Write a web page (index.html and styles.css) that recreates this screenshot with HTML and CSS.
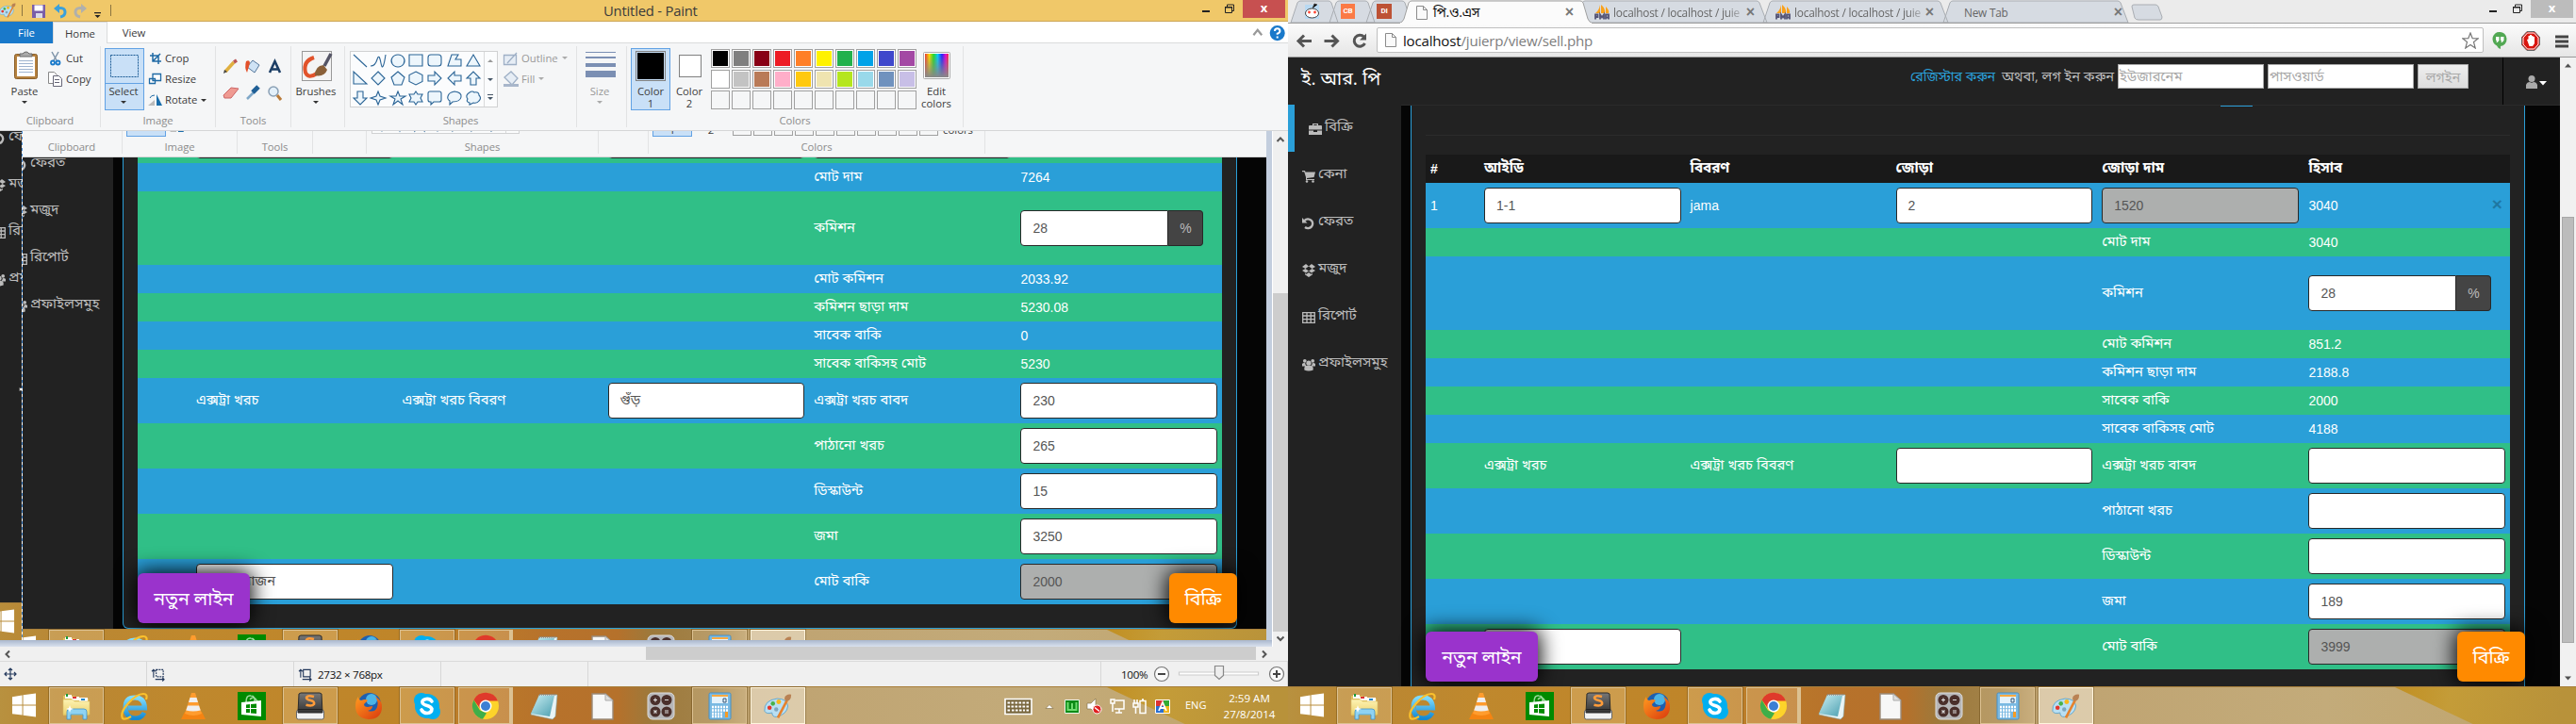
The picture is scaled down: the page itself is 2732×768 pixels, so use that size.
FILE: index.html
```html
<!DOCTYPE html>
<html lang="bn">
<head>
<meta charset="utf-8">
<title>পি.ও.এস</title>
<link rel="stylesheet" href="styles.css">
</head>
<body>
<svg class="defs" aria-hidden="true">
  <defs>
    <linearGradient id="gYellow" x1="0" y1="0" x2="0" y2="1"><stop offset="0" stop-color="#fdf3b4"/><stop offset="1" stop-color="#edd26d"/></linearGradient>
    <linearGradient id="gBlue" x1="0" y1="0" x2="0" y2="1"><stop offset="0" stop-color="#7fdcff"/><stop offset="1" stop-color="#1489d2"/></linearGradient>
    <linearGradient id="gDark" x1="0" y1="0" x2="0" y2="1"><stop offset="0" stop-color="#777"/><stop offset="1" stop-color="#333"/></linearGradient>
    <linearGradient id="gFox" x1="0" y1="0" x2="1" y2="1"><stop offset="0" stop-color="#ff9a1f"/><stop offset="1" stop-color="#d9380d"/></linearGradient>
    <linearGradient id="gPad" x1="0" y1="0" x2="1" y2="1"><stop offset="0" stop-color="#c9eef2"/><stop offset="1" stop-color="#4b9fb0"/></linearGradient>
    <linearGradient id="gRain" x1="0" y1="0" x2="1" y2="0"><stop offset="0" stop-color="#e33"/><stop offset=".18" stop-color="#fd0"/><stop offset=".36" stop-color="#2d2"/><stop offset=".54" stop-color="#0cf"/><stop offset=".72" stop-color="#22f"/><stop offset=".88" stop-color="#e0c"/><stop offset="1" stop-color="#e33"/></linearGradient>
    <linearGradient id="gFade" x1="0" y1="0" x2="0" y2="1"><stop offset="0" stop-color="#888" stop-opacity="0"/><stop offset="1" stop-color="#888"/></linearGradient>
  </defs>
  <symbol id="win" viewBox="0 0 28 28"><path fill="#fff" d="M1 5l11-2v10.500H1zM13 2.800L27 1v12.500H13zM1 14.500h11V25L1 23.500zM13 14.500h14V27l-14-1.800z"/></symbol>
  <symbol id="explorer" viewBox="0 0 30 30"><path fill="#e2c25c" d="M1 4h12l2 3h13v18H1z"/><path fill="#fff" d="M3 3h7v4H3zM10 5h8v4h-8zM18 6h9v4h-9z"/><path fill="#1a9a37" d="M4 2h2v3H4z"/><path fill="#d33" d="M11 5h4v2h-4z"/><path fill="#28c" d="M20 7h4v2h-4z"/><path fill="url(#gYellow)" stroke="#d9be63" stroke-width=".6" d="M1 8h10l2 2h16v14H1z"/><path fill="#8fd3f3" stroke="#3f93c9" stroke-width=".8" d="M5 21q0-3 3-3h15q3 0 3 3v8h-4v-5H9v5H5z"/><path fill="#fff" d="M8 14l1 3 3 1-3 1-1 3-1-3-3-1 3-1z"/></symbol>
  <symbol id="ie" viewBox="0 0 30 30"><path fill="none" stroke="url(#gBlue)" stroke-width="5" d="M25 22q-3 6-10 6Q5 27 5 16.500T15 6q10 0 10.500 11H8"/><path fill="none" stroke="#fbc12c" stroke-width="2.200" d="M27 8q2-6-3-6Q17 2 8 12T2 28q2 2 9-2"/></symbol>
  <symbol id="vlc" viewBox="0 0 30 30"><path fill="#f58412" d="M6 21h18l4 8H2z"/><path fill="#ff9c2e" d="M13 1h4l7 22q-9 4-18 0z"/><path fill="#eee" d="M11.500 6h7l1.500 5h-10zM9 14.500h12l1.700 5q-8 2-15.400 0z"/></symbol>
  <symbol id="store" viewBox="0 0 30 30"><path fill="#008a00" d="M0 0h30v30H0z"/><path fill="none" stroke="#9edc9e" stroke-width="1.500" d="M9 11q0-8 5-7 5 0 4 7M13 8q4-5 8 2"/><path fill="#fff" d="M4 11l21-2v17L4 24z"/><path fill="#008a00" d="M9 13.500l4-.4v4H9zM14 13l6-.6v4.700h-6zM9 18h4v4H9zM14 18h6v5l-6-.6z"/></symbol>
  <symbol id="sublime" viewBox="0 0 30 30"><rect x="0.500" y="19" width="29" height="10" rx="2" fill="#f2f2f2" stroke="#666"/><path fill="url(#gDark)" stroke="#2b2b2b" d="M5 1h20l2 1 1 20H2L3 2z"/><path stroke="#222" d="M2 18.500h26"/><path fill="none" stroke="#ff9c3a" stroke-width="2.600" d="M19 5q-7-2-8 1 0 2 4.500 3t3.500 4q-2 2.500-8.500.7"/></symbol>
  <symbol id="firefox" viewBox="0 0 30 30"><circle cx="16" cy="13" r="12" fill="#1f5fae"/><circle cx="18" cy="8" r="6" fill="#4bb4e6"/><path fill="url(#gFox)" d="M4 5q0 3 3 4 5-2 7 0l-4 4q0 3 4 3l5-1q0 4-5 5 8 2 10-4 2-5-2-11 8 4 7 12-1 12-14 12Q1 28 1 15 1 9 4 5z"/></symbol>
  <symbol id="skype" viewBox="0 0 30 30"><circle cx="15" cy="15" r="13" fill="#00aff0"/><circle cx="9" cy="9" r="8" fill="#00aff0"/><circle cx="21" cy="21" r="8" fill="#00aff0"/><path fill="none" stroke="#fff" stroke-width="3.600" stroke-linecap="round" d="M20 10q-2-3-6-2.500-5 1-4 4 1 2 5 3t5 3.500q0 4-5 4.500-4 0-6-3.500"/></symbol>
  <symbol id="chrome" viewBox="0 0 30 30"><circle cx="15" cy="15" r="14" fill="#fdd32a"/><path fill="#df3a2b" d="M2.500 8.500A14 14 0 0 1 28 9.500H15l-6 8z"/><path fill="#3fae49" d="M2.500 8.500l6.500 11 7 3-4 6.200A14 14 0 0 1 2.500 8.500z"/><circle cx="15" cy="15" r="6.500" fill="#fff"/><circle cx="15" cy="15" r="5" fill="#3b7fd4"/></symbol>
  <symbol id="notepad" viewBox="0 0 30 30"><path fill="#e9f4f5" stroke="#8aa" stroke-width=".6" d="M10 3h19l-2 23-3 3L1 24z"/><path fill="url(#gPad)" d="M10 4h16l-5 22L1 23z"/><path stroke="#888" stroke-width="1.500" stroke-dasharray="1 1" d="M10 3h18"/></symbol>
  <symbol id="doc" viewBox="0 0 30 30"><path fill="#f7f7f7" stroke="#9b8a7a" stroke-width="1.400" d="M4 2h14l8 7v20H4z"/><path fill="#ddd" stroke="#aaa" d="M18 2v7h8z"/></symbol>
  <symbol id="ops" viewBox="0 0 30 30"><rect x="1" y="1" width="28" height="28" rx="5" fill="#b6b6b8" stroke="#ddd"/><g fill="#4a2f2b"><circle cx="9" cy="8.500" r="5.500"/><circle cx="21" cy="8.500" r="5.500"/><circle cx="9" cy="21" r="5.500"/><circle cx="21" cy="21" r="5.500"/></g><path stroke="#ddd" stroke-width="1.200" d="M7 8.500h4M9 6.500v4M19 8.500h4M7.500 19.500l3 3M10.500 19.500l-3 3M19 20h4M19 22h4"/></symbol>
  <symbol id="calc" viewBox="0 0 30 30"><rect x="4" y="1" width="23" height="28" rx="1.500" fill="#79b9e2" stroke="#4a8fc0"/><path fill="#f9a940" d="M7 3h17v2H7z"/><path fill="#e4f2fb" d="M7 5h17v7H7z"/><path fill="none" stroke="#357" d="M19 7h3v4h-3z"/><path stroke="#fff" stroke-width="2.300" stroke-dasharray="2 1" d="M7 16h17M7 19.500h17M7 23h12M7 26h12"/><path fill="#f59b23" d="M21 21h3v6h-3z"/></symbol>
  <symbol id="palette" viewBox="0 0 34 30"><path fill="#b9dff3" stroke="#5aa3cd" d="M16 6q12 0 13 9-1 10-14 13-5 0-5-5-7 2-9-2Q0 8 16 6z"/><circle cx="7" cy="17" r="2.600" fill="#e3372c"/><circle cx="11" cy="12" r="2.600" fill="#48b14b"/><circle cx="18" cy="10" r="2.800" fill="#f9b81b"/><circle cx="15" cy="19" r="2.500" fill="#7ea6be"/><path stroke="#e6822c" stroke-width="3" d="M28 8L17 29"/><path fill="#b98254" d="M25 5q2-5 8-4 0 7-5 8-3 0-3-4z"/></symbol>
  <symbol id="case" viewBox="0 0 14 14"><path fill="currentColor" d="M4 3V1h6v2h3q1 0 1 1v3.500H0V4q0-1 1-1zm1.300 0h3.400V2H5.300zM0 8.500h5V10h4V8.500h5V13H0z"/></symbol>
  <symbol id="cart" viewBox="0 0 14 14"><path fill="currentColor" d="M0 1h3l.5 1.500H14L12.500 8 5 9v1h8v1H4V8L2.200 2.200H0z"/><circle cx="5" cy="12.500" r="1.300" fill="currentColor"/><circle cx="11.500" cy="12.500" r="1.300" fill="currentColor"/></symbol>
  <symbol id="undo" viewBox="0 0 14 14"><path fill="none" stroke="currentColor" stroke-width="2.400" d="M2.500 4A5 4.800 0 1 1 3 11"/><path fill="currentColor" d="M0 1v5.500h5.500z"/></symbol>
  <symbol id="box" viewBox="0 0 14 14"><path fill="currentColor" d="M4 0l3 2.500L3.500 5 0 3zM10 0L7 2.500 10.500 5 14 3zM0 7l3.500-2L7 7.500 4 9.500zM14 7l-3.500-2L7 7.500l3 2zM3 10l1.500.8L7 9l2.500 1.800L11 10v1.200L7 14l-4-2.800z"/></symbol>
  <symbol id="table" viewBox="0 0 14 14"><path fill="none" stroke="currentColor" stroke-width="1.300" d="M.7 1.700h12.600v10.600H.7zM.7 5h12.600M.7 8.600h12.600M5 2v10M9.200 2v10"/></symbol>
  <symbol id="users" viewBox="0 0 15 14"><g fill="currentColor"><circle cx="3" cy="2.500" r="2"/><circle cx="12" cy="2.500" r="2"/><circle cx="7.500" cy="5" r="2.800"/><path d="M0 8.500V6q1-1.500 3.500-1 0 2 1.500 3l-1 .5zM15 8.500V6q-1-1.500-3.500-1 0 2-1.500 3l1 .5zM2.500 13V10.500q0-2.500 2.500-2.500h5q2.500 0 2.500 2.500V13q-5 2-10 0z"/></g></symbol>
  <symbol id="page" viewBox="0 0 12 15"><path fill="#fafafa" stroke="#8b8b8b" d="M.5.5h7l4 4v10H.5zM7.500.5v4h4"/></symbol>
  <symbol id="pma" viewBox="0 0 16 16"><path fill="#f9a11b" d="M1 9Q5 6 6 0v9zM7 9V0q5 4 4 9zM12 2q4 4 3 7h-3z"/><path stroke="#557" stroke-width="1.800" d="M1 15.500v-5h2.500v2.500H1M6 15.500v-5l2 3 2-3v5M12 15.500v-5h3v5M12 13.500h3" fill="none"/></symbol>
</svg>

<div class="desk">
  <section class="monitor">
    <div class="paint">
      <header class="p-title">
        <svg class="p-quick" viewBox="0 0 120 23" width="120" height="23">
          <use href="#palette" x="-1" y="3" width="18" height="16"/>
          <path stroke="#8b7440" d="M23.500 5v12M117.500 5v12"/>
          <path fill="#7a5ea8" d="M34 5h14v14H34z"/><path fill="#fff" d="M36.500 5.500h9v6h-9z"/><path fill="#d9d9e6" d="M38 14h7v5h-7z"/>
          <path fill="none" stroke="#3aa0dc" stroke-width="3" d="M60 9q9-2 9 4 0 4-5 5"/><path fill="#3aa0dc" d="M57 9l6-5v10z"/>
          <path fill="none" stroke="#b0b0ac" stroke-width="3" d="M89 9q-9-2-9 4 0 4 5 5"/><path fill="#b0b0ac" d="M92 9l-6-5v10z"/>
          <path fill="#222" d="M100 13h7v1.200h-7zM100.500 16h6l-3 3z"/>
        </svg>
        <span class="p-name">Untitled - Paint</span>
        <div class="winbtns"><svg viewBox="0 0 50 20" width="50" height="20"><path fill="#222" d="M7 11h8v2H7z"/><path fill="none" stroke="#222" d="M31.500 7.500h7v6h-7zM33.500 7V5h7v6.500h-2"/><path fill="#222" d="M31 7h8v1.500h-8z"/></svg><b class="close">x</b></div>
      </header>
      <nav class="p-tabs"><span class="file">File</span><span class="on">Home</span><span>View</span>
        <svg class="p-help" viewBox="0 0 34 20" width="34" height="20"><path fill="none" stroke="#999" stroke-width="2" d="M1 13l4-5 4 5"/><circle cx="24" cy="11" r="7.300" fill="#1979ca"/><path fill="none" stroke="#fff" stroke-width="1.800" d="M21.500 9q0-2.500 2.500-2.500T26.500 9q0 1.500-2.500 2.500v1M24 14v2"/></svg></nav>
      <div id="ribbon" class="ribbon"></div>
      <div class="canvas">
        <div class="strip">
          <ul class="side side-strip" data-side="2"></ul>
          <div class="taskbar tb-strip" data-bar></div>
          <i class="handle"></i>
        </div>
        <div class="shot">
          <div class="shot-ribbon"><div id="ribbon2" class="ribbon"></div></div>
          <div class="shot-body">
            <ul class="side side-shot" data-side="2"></ul>
            <div class="panel">
              <div class="grid" id="gridA"></div>
              <button class="fab new">নতুন লাইন</button><button class="fab sell">বিক্রি</button>
            </div>
          </div>
          <div class="shot-bar"><div class="taskbar" data-bar></div></div>
        </div>
        <div class="vscroll"><svg viewBox="0 0 16 12"><path d="M4.500 8L8 4.500 11.500 8"/></svg><i></i><svg viewBox="0 0 16 12"><path d="M4.500 4.500L8 8l3.500-3.500"/></svg></div>
      </div>
      <div class="hscroll"><svg viewBox="0 0 16 16"><path d="M10 4.500L6.500 8l3.500 3.500"/></svg><i></i><svg viewBox="0 0 16 16"><path d="M6 4.500L9.500 8 6 11.500"/></svg></div>
      <footer class="status">
        <div><svg viewBox="0 0 12 12" width="12" height="12"><path d="M6 0v12M0 6h12M4 2l2-2 2 2M4 10l2 2 2-2M2 4L0 6l2 2M10 4l2 2-2 2"/></svg></div>
        <div><svg viewBox="0 0 15 13" width="14" height="13"><path d="M2 10V1M0 3l2-2 2 2M4 12h10M12 10l2 2-2 2"/><path stroke-dasharray="2 1" d="M5 1h8v8H5z"/></svg></div>
        <div><svg viewBox="0 0 15 13" width="14" height="13"><path d="M2 10V1M0 3l2-2 2 2M4 12h10M12 10l2 2-2 2M5 1h8v8H5z"/></svg><span>2732 × 768px</span></div>
        <div></div><div class="wide"></div>
        <div class="zoom"><span>100%</span><svg viewBox="0 0 140 20" width="140" height="20"><g fill="#fafafa" stroke="#777"><circle cx="9" cy="10" r="7.500"/><circle cx="131" cy="10" r="7.500"/></g><path stroke="#444" stroke-width="2" d="M5 10h8M127 10h8M131 6v8"/><path fill="#fff" stroke="#ccc" d="M27.500 8h84v3h-84z"/><path fill="#eee" stroke="#888" d="M65.500 1.500h9v10l-4.500 4-4.500-4z"/></svg></div>
      </footer>
    </div>
    <div class="taskbar" data-bar="tray"></div>
  </section>

  <section class="monitor">
    <div class="chrome">
      <div class="tabstrip">
        <svg class="tabshape" viewBox="0 0 940 25" width="940" height="25">
          <g fill="#d6dbe2" stroke="#a9adb2"><path d="M695 24l7-21q1-2 3-2h175q2 0 3 2l8 21zM504 24l7-21q1-2 3-2h175q2 0 3 2l8 21zM312 24l0-21q1-2 3-2h182q2 0 3 2l8 21zM83 24l7-21q1-2 3-2h28q2 0 3 2l7 21zM44 24l7-21q1-2 3-2h28q2 0 3 2l7 21zM3 24l7-21q1-2 3-2h30q2 0 3 2l7 21z"/><path d="M895 7q0-2 2-2h23q2 0 3 2l4 11q0 3-2 3h-23q-3 0-4-2z"/></g>
          <path stroke="#a0a0a0" d="M0 24.500h940"/>
          <path fill="#fbfbfb" stroke="#a0a0a0" d="M118 25q4-2 5-5l5-17q1-2 3-2h179q2 0 3 2l5 17q1 3 5 5"/><path stroke="#fbfbfb" stroke-width="2" d="M119 25h203"/>
          <rect x="18" y="5" width="15" height="15" fill="#b8d9f2"/><ellipse cx="25.500" cy="14" rx="7" ry="5" fill="#fff" stroke="#444"/><path stroke="#444" d="M26 9l2-5 3 1"/><circle cx="22.500" cy="13" r="1.400" fill="#f43"/><circle cx="28.500" cy="13" r="1.400" fill="#f43"/>
        </svg>
        <div class="tabs">
          <b class="pin cb">CB</b><b class="pin di">DI</b>
          <div class="tab t1"><svg width="12" height="15"><use href="#page"/></svg><span>পি.ও.এস</span><em>×</em></div>
          <div class="tab t2"><svg width="16" height="16"><use href="#pma"/></svg><span>localhost / localhost / juie</span><em>×</em></div>
          <div class="tab t3"><svg width="16" height="16"><use href="#pma"/></svg><span>localhost / localhost / juie</span><em>×</em></div>
          <div class="tab t4"><span>New Tab</span><em>×</em></div>
        </div>
        <div class="winbtns"><svg viewBox="0 0 50 20" width="50" height="20"><path fill="#222" d="M6 11h8v2H6z"/><path fill="none" stroke="#222" d="M31.500 7.500h7v6h-7zM33.500 7V5h7v6.500h-2"/><path fill="#222" d="M31 7h8v1.500h-8z"/></svg><b class="close grey">x</b></div>
      </div>
      <div class="toolbar">
        <svg viewBox="0 0 94 36" width="94" height="36"><g fill="none" stroke="#555" stroke-width="3"><path d="M11.500 18.500H25M17 12.500l-6 6 6 6M38.500 18.500H52M46.500 12.500l6 6-6 6M80.500 14a6 6 0 1 0 1 7"/></g><path fill="#555" d="M83 10.500v7h-7z"/></svg>
        <div class="omni"><svg width="12" height="15"><use href="#page"/></svg><p><b>localhost</b>/juierp/view/sell.php</p><svg viewBox="0 0 18 18" width="18" height="18"><path fill="#fff" stroke="#777" stroke-width="1.200" d="M9 1l2.200 5.700 6 .2-4.700 3.700L14.200 17 9 13.400 3.800 17l1.700-6.400L.8 6.900l6-.2z"/></svg></div>
        <svg viewBox="0 0 98 36" width="98" height="36"><path fill="#52a853" d="M17 9a7 7.500 0 0 1 1 15v3q-3-1-4-3.500A7 7.500 0 0 1 17 9z"/><path fill="#fff" d="M13 14h3.500v4L14.500 20h-1l.5-2h-1zM18 14h3.500v4L19.500 20h-1l.5-2h-1z"/><path fill="#d9150f" stroke="#666" d="M46 8.500h8l5.500 6v8l-5.500 6h-8l-5.500-6v-8z"/><path fill="none" stroke="#fff" d="M46.500 10h7l4.500 5v7l-4.500 5h-7L42 22v-7z"/><path fill="#fff" d="M46 17l1.500-.5V13h1.500v-1h2v1h1.500v1H54v7l-2 3h-3.500z"/><path stroke="#444" stroke-width="3" d="M76 14h14M76 19h14M76 24h14"/></svg>
      </div>
      <div class="view">
        <div class="page">
          <header class="nav"><h1>ই. আর. পি</h1>
            <div class="login"><a>রেজিস্টার করুন</a><span>অথবা, লগ ইন করুন</span><i>ইউজারনেম</i><i>পাসওয়ার্ড</i><button>লগইন</button></div>
            <div class="me"><svg viewBox="0 0 22 14" width="22" height="14"><g fill="#aaa"><circle cx="6" cy="3.500" r="3.500"/><path d="M0 14v-4q1-3 4-3 2 1.500 4 0 3 0 4 3v4z"/></g><path fill="#fff" d="M14 6h8l-4 4.500z"/></svg></div>
          </header>
          <div class="content">
            <ul class="side" data-side="0"></ul>
            <div class="panel live">
              <span class="stub"></span><div class="rule"></div>
              <div class="grid" id="gridB"></div>
              <button class="fab new">নতুন লাইন</button><button class="fab sell">বিক্রি</button>
            </div>
          </div>
        </div>
        <div class="pagescroll"><svg viewBox="0 0 17 17"><path d="M5 10.500h7l-3.500-4z"/></svg><i></i><svg viewBox="0 0 17 17"><path d="M5 6.500h7l-3.500 4z"/></svg></div>
      </div>
    </div>
    <div class="taskbar" data-bar></div>
  </section>
</div>
<script src="app.js"></script>
</body>
</html>
```
FILE: styles.css
```css
* { box-sizing: border-box; }
body { margin: 0; background: #000; overflow: hidden; font-family: "Open Sans", "Noto Sans", "Noto Sans Bengali", sans-serif; }
.defs { position: absolute; width: 0; height: 0; }
svg { display: block; flex: none; }
button { border: 0; font: inherit; padding: 0; }
.desk { display: flex; width: 2732px; height: 768px; }
.monitor { width: 1366px; height: 768px; display: flex; flex-direction: column; overflow: hidden; }

/* window chrome shared by both apps */
.winbtns { display: flex; margin-left: auto; height: 20px; }
.close { width: 45px; height: 19px; background: #c75050; color: #fff; text-align: center; font: 700 13px/16px "Open Sans", sans-serif; margin-right: 3px; }
.close.grey { background: #bcbcbc; }

/* paint */
.paint { height: 728px; display: flex; flex-direction: column; color: #3b3b3b; font-size: 11.3px; }
.p-title { height: 23px; flex: none; display: flex; background: #f0c869; border-bottom: 1px solid #cda757; position: relative; }
.p-name { margin-left: 520px; font-size: 14.8px; line-height: 22px; letter-spacing: -.2px; white-space: nowrap; }
.p-tabs { height: 23px; flex: none; display: flex; background: #fff; line-height: 24px; }
.p-tabs span { width: 56px; text-align: center; border-bottom: 1px solid #dadbdc; }
.p-tabs .file { background: #1979ca; color: #fff; border: 0; }
.p-tabs .on { width: 58px; background: #f5f6f7; border: 1px solid #dadbdc; border-bottom: 0; }
.p-help { margin-left: auto; width: 1196px; border-bottom: 1px solid #dadbdc; height: 23px; padding-left: 1158px; }
.ribbon { height: 93px; width: 1366px; flex: none; display: flex; background: #f5f6f7; border-bottom: 1px solid #d5d6d7; font-size: 11.3px; color: #3b3b3b; }
.grp { position: relative; display: flex; flex-direction: column; justify-content: flex-end; text-align: center; margin: 3px 0; border-right: 1px solid #e2e3e4; color: #8c8c8c; line-height: 15px; height: 86px; letter-spacing: -.1px; }
.grp svg { position: absolute; left: 0; top: -3px; }
.grp .lab { position: absolute; white-space: nowrap; line-height: 14px; color: #3b3b3b; letter-spacing: 0; }
.grp .mid { transform: translateX(-50%); text-align: center; line-height: 13px; }
.grp .off { color: #999; }
.canvas { height: 547px; flex: none; display: flex; background: linear-gradient(#a9b7cd, #d9e1ee) bottom / 100% 7px no-repeat #c3cede; }
.strip { width: 24px; height: 540px; overflow: hidden; background: #222; position: relative; }
.strip::after { content: ""; position: absolute; right: 0; top: 0; width: 1px; height: 540px; background: repeating-linear-gradient(#4b8fd8 0 3px, #fff 3px 6px); }
.handle { position: absolute; right: 0; top: 272px; width: 4px; height: 4px; background: #fff; border: 1px solid #555; }
.side { list-style: none; margin: 0; padding: 0; width: 120px; flex: none; background: #222; color: #bbb; font-size: 15px; }
.side li { height: 50px; padding: 0 0 4px 15px; display: flex; align-items: center; gap: 3px; white-space: nowrap; }
.side li svg { margin-top: 5px; }
.side .active { border-left: 7px solid #2a9fd8; }
.side-strip { margin: -18px 0 0 -23px; height: 518px; }
.tb-strip { margin-left: -23px; }
.shot { width: 1319px; height: 540px; overflow: hidden; background: #050505; }
.shot-ribbon { height: 28px; overflow: hidden; }
.shot-ribbon .ribbon { margin: -65px 0 0 -1px; }
.shot-body { height: 500px; display: flex; overflow: hidden; }
.side-shot { margin: -18px 10px 0 -24px; height: 518px; }
.shot-bar { height: 12px; overflow: hidden; }
.shot-bar .taskbar { margin-left: -24px; }
.vscroll { width: 17px; margin-left: auto; height: 547px; background: #f0f0f0; border-left: 1px solid #fff; display: flex; flex-direction: column; justify-content: space-between; padding: 3px 0; }
.vscroll svg, .hscroll svg { fill: none; stroke: #555; stroke-width: 2; }
.vscroll i { height: 359px; background: #cdcdcd; margin-top: 155px; }
.hscroll { height: 16px; flex: none; background: #f0f0f0; display: flex; border-bottom: 1px solid #dadada; }
.hscroll svg { width: 16px; height: 16px; }
.hscroll i { width: 647px; background: #cdcdcd; margin: 0 1px 1px 669px; }
.status { height: 26px; flex: none; display: flex; background: #f0f0f0; font-size: 11.6px; color: #111; }
.status div { width: 156px; border-right: 1px solid #d7d7d7; display: flex; align-items: center; gap: 6px; padding-left: 5px; }
.status span { letter-spacing: -.3px; }
.status svg { fill: none; stroke: #24395c; stroke-width: 1.2; overflow: visible; }
.status .wide { width: 544px; }
.status .zoom { width: 198px; padding-left: 21px; }

/* dark app panel */
.panel { width: 1182px; border: 1px solid #2a9fd8; border-top: 0; border-radius: 0 0 6px 6px; background: #222; padding: 0 15px; position: relative; height: 500px; }
.grid { font: 14px "Liberation Sans", "Noto Sans Bengali", sans-serif; color: #fff; }
#gridA { margin-top: -42px; }
.row { display: grid; grid-template-columns: 57px 218.6px 218px 218.6px 219.2px 218.6px; align-items: center; height: 30px; width: 1150px; }
.row.m { height: 48px; }
.row.l { height: 78px; }
.row.b { background: #2a9fd8; }
.row.g { background: #30bf87; }
.row.h { background: #191919; font-weight: 700; }
.row > div { padding: 0 5px; white-space: nowrap; position: relative; }
.bn { font-size: 14.7px; line-height: 26px; position: relative; top: -1px; }
.h .bn { font-size: 15.2px; }
.inp { display: block; width: 208.6px; height: 38px; border: 1px solid #282828; border-radius: 4px; background: #fff; color: #555; line-height: 36px; padding: 0 12px; }
.inp.dis { background: #adafae; }
.pct { display: flex; }
.pct .inp { width: 157px; border-radius: 4px 0 0 4px; }
.pct b { width: 37px; height: 38px; border: 1px solid #282828; border-left: 0; border-radius: 0 4px 4px 0; background: #444; color: #bbb; font-weight: 400; line-height: 36px; text-align: center; }
.del { position: absolute; right: 8px; top: -3px; font: 700 19px/20px "Liberation Sans", sans-serif; color: #1f77a2; }
.fab { position: absolute; height: 53px; bottom: 5px; border-radius: 6px; color: #fff; font-size: 19.6px; line-height: 49px; text-align: center; box-shadow: 0 0 22px 2px #000; white-space: nowrap; }
.new { left: 15px; width: 119px; background: #9a33cc; }
.sell { right: -1px; width: 72px; background: #ff8a00; }

/* chrome */
.chrome { height: 728px; display: flex; flex-direction: column; }
.tabstrip { height: 25px; flex: none; background: #ebebeb; position: relative; display: flex; border-bottom: 1px solid #a0a0a0; }
.tabshape { position: absolute; left: 0; top: 0; }
.tabs { display: flex; position: relative; padding-left: 56px; height: 24px; align-items: center; font-size: 11.8px; color: #666; letter-spacing: -.2px; }
.pin { width: 15px; height: 16px; background: #fb7a45; color: #fff; font: 700 8px/16px "Roboto", sans-serif; text-align: center; margin-right: 23px; }
.pin.di { width: 16px; background: #bd5235; margin-right: 26px; }
.tab { display: flex; align-items: center; gap: 6px; width: 190px; padding-top: 2px; white-space: nowrap; }
.tab em { font: 700 16px/20px "Liberation Sans", sans-serif; margin-left: auto; margin-right: 22px; color: #777; }
.t1 { color: #111; font-size: 14px; width: 189px; }
.t2 { width: 192px; gap: 4px; }
.t3 { gap: 4px; width: 190px; }
.t4 { padding-left: 10px; width: 206px; }
.tab.t4 em { margin-right: 28px; }
.t2 span, .t3 span { width: 140px; overflow: hidden; -webkit-mask: linear-gradient(90deg, #000 120px, transparent 142px); }
.toolbar { height: 36px; flex: none; display: flex; background: linear-gradient(#fbfbfb, #e6e6e6); border-bottom: 1px solid #999; }
.omni { width: 1174px; height: 27px; margin-top: 4px; background: #fff; border: 1px solid #bfbfbf; border-radius: 2px; display: flex; align-items: center; padding: 0 4px 0 8px; font-size: 15.1px; letter-spacing: -.2px; color: #7d7d7d; }
.omni p { margin: 0 auto 0 7px; }
.omni b { color: #111; font-weight: 400; }
.view { display: flex; height: 667px; }
.page { width: 1349px; background: #050505; height: 667px; overflow: hidden; }
.nav { height: 51px; background: #222; border-bottom: 1px solid #2b2b2b; display: flex; color: #fff; }
.nav h1 { margin: 0 0 0 14px; font-size: 19.5px; line-height: 43px; font-weight: 400; width: 646px; }
.login { display: flex; font-size: 14.6px; padding-top: 7px; line-height: 25px; color: #bbb; white-space: nowrap; width: 628px; }
.login a { color: #2a9fd8; width: 97px; font-size: 14.3px; }
.login span { width: 123px; }
.login i { width: 155px; height: 26px; background: #fff; border: 1px solid #a9a9a9; margin-right: 4px; font-style: normal; color: #a9a9a9; padding-left: 1px; line-height: 23px; }
.login button { width: 54px; height: 26px; background: linear-gradient(#eee, #ddd); border: 1px solid #a9a9a9; color: #aaa; line-height: 22px; }
.me { width: 61px; border-left: 1px solid #000; padding: 19px 0 0 24px; }
.content { display: flex; height: 616px; }
.content .side { margin: -1px 10px 0 0; height: 617px; }
.live { height: 616px; border-bottom: 0; border-radius: 0; padding-top: 31px; }
.stub { position: absolute; left: 858px; top: 0; width: 34px; height: 1px; background: #2a9fd8; }
.rule { height: 1px; background: #2b2b2b; margin-bottom: 20px; }
.pagescroll { width: 17px; background: #f1f1f1; display: flex; flex-direction: column; justify-content: space-between; }
.pagescroll svg { height: 17px; fill: #505050; }
.pagescroll i { height: 452px; margin: 122px 2px 0 2px; background: #bcbcbc; border: 1px solid #a8a8a8; }

/* taskbar */
.taskbar { position: relative; width: 1366px; height: 40px; flex: none; display: flex; border-top: 1px solid #a87f3b; background: linear-gradient(90deg, #b8913f 0, #b98734 60px, #bf882d 200px, #bf8529 420px, #b7722b 580px, #b5712b 655px, #9d793b 690px, #a3834a 755px, #bfa371 800px, #c3ab7a 1100px, #c0a46a 1366px); }
.taskbar::after { content: ""; position: absolute; right: 0; top: 0; width: 192px; height: 39px; background: linear-gradient(100deg, #c18f22, #c49c38 30%, #b8923a 90%); clip-path: polygon(0 0, 100% 0, 100% 100%, 43% 100%); }
.start { padding: 5px 0 0 12px; width: 52px; height: 39px; }
.tasks { display: flex; gap: 4px; }
.task { width: 58px; height: 39px; padding: 4px 0 0 13px; border: 1px solid transparent; }
.task.run { border-color: #dcc192; background: rgba(255, 236, 200, .22); box-shadow: 0 0 0 1px rgba(90, 60, 10, .35); }
.task.stack { box-shadow: -4px 0 0 -1px #dcc192 inset; }
.task.front { border-color: #fff5dd; background: rgba(255, 250, 240, .45); }
.tray { position: relative; z-index: 1; margin-left: auto; display: flex; color: #fff; font-size: 11.6px; }
.clock { width: 82px; text-align: center; line-height: 17px; padding-top: 3px; }
.lang { width: 40px; padding-left: 13px; line-height: 38px; font-size: 11px; }
```
FILE: app.js
```js
const apps = [["explorer", "run"], ["ie"], ["vlc"], ["store"], ["sublime", "run"], ["firefox"], ["skype", "run"],
  ["chrome", "run stack"], ["notepad"], ["doc"], ["ops"], ["calc", "run"], ["palette", "run front"]];
const tray = `<div class="tray"><svg viewBox="0 0 180 39" width="180" height="39">
<path fill="#7a683f" stroke="#fff" stroke-width="1.600" d="M2 12.500h28v16H2z"/><path stroke="#fff" stroke-width="2.200" stroke-dasharray="2.600 1.400" d="M4.500 16.500h24M4.500 20.500h24M4.500 24.500h3M24.500 24.500h4M9 24.500h14"/>
<path fill="#fff" stroke="#7a683f" stroke-width=".6" d="M45 22.500h8l-4-4z"/>
<path fill="#0b8a16" stroke="#eaf7ea" d="M65.500 13.500h15v14h-15z"/><path fill="none" stroke="#6fdc6f" stroke-width="2" d="M68.500 16v8h9v-8M73 17v6"/>
<path fill="#fff" stroke="#7a683f" stroke-width=".6" d="M89 17h4l5-5v16l-5-5h-4z"/><circle cx="99.500" cy="23.500" r="4.500" fill="#e02020" stroke="#fff"/><path stroke="#fff" stroke-width="1.500" d="M97 21.500l5 4"/>
<path fill="none" stroke="#fff" stroke-width="1.500" d="M119 14h9v9h-10M119 27h7M123 23v4M114 13h4v4h-4zM116 17v9"/>
<path fill="none" stroke="#fff" stroke-width="1.500" d="M145 14.500h6v13h-6zM147 13h2M138 17h5v4h-5zM139 13v4M142 13v4M140.500 21v7"/>
<path fill="#d33" stroke="#fff" d="M161.500 13.500h15v14h-15z"/><path fill="#2a6fd0" d="M162 20h8v7h-8z"/><path fill="#3a3" d="M170 14h6v6h-6z"/><path fill="#f3b61c" d="M170 20h6v7h-6z"/><path fill="none" stroke="#fff" stroke-width="1.800" d="M165 25l4-9 4 9M166.500 22h5"/>
</svg><span class="lang">ENG</span><span class="clock">2:59 AM<br>27/8/2014</span></div>`;
document.querySelectorAll("[data-bar]").forEach(el => {
  el.innerHTML = `<div class="start"><svg width="27" height="28"><use href="#win"/></svg></div><div class="tasks">` +
    apps.map(([id, c]) => `<div class="task ${c || ""}"><svg width="30" height="30"><use href="#${id}"/></svg></div>`).join("") +
    "</div>" + (el.dataset.bar === "tray" ? tray : "");
});

const links = [["case", "বিক্রি"], ["cart", "কেনা"], ["undo", "ফেরত"], ["box", "মজুদ"], ["table", "রিপোর্ট"], ["users", "প্রফাইলসমুহ"]];
document.querySelectorAll("[data-side]").forEach(el => {
  el.innerHTML = links.slice(+el.dataset.side).map(([id, t]) =>
    `<li class="${t === "বিক্রি" ? "active" : ""}"><svg width="14" height="14"><use href="#${id}"/></svg>${t}</li>`).join("");
});

const bn = t => `<span class="bn">${t}</span>`;
const inp = (v = "", c = "") => `<span class="inp ${c}">${v}</span>`;
const pct = v => `<span class="pct">${inp(v)}<b>%</b></span>`;
const row = (c, cells) => `<div class="row ${c}">${Array.from({ length: 6 }, (_, i) => `<div>${cells[i] || ""}</div>`).join("")}</div>`;
const sum = (c, label, v) => row(c, ["", "", "", "", bn(label), v]);

document.getElementById("gridA").innerHTML =
  row("m g", ["", inp(), "", inp(), inp()]) +
  sum("b", "মোট দাম", "7264") + sum("l g", "কমিশন", pct("28")) + sum("b", "মোট কমিশন", "2033.92") +
  sum("g", "কমিশন ছাড়া দাম", "5230.08") + sum("b", "সাবেক বাকি", "0") + sum("g", "সাবেক বাকিসহ মোট", "5230") +
  row("m b", ["", bn("এক্সট্রা খরচ"), bn("এক্সট্রা খরচ বিবরণ"), inp(bn("গুঁড়")), bn("এক্সট্রা খরচ বাবদ"), inp("230")]) +
  sum("m g", "পাঠানো খরচ", inp("265")) + sum("m b", "ডিস্কাউন্ট", inp("15")) + sum("m g", "জমা", inp("3250")) +
  row("m b", ["", inp(bn("কি প্রয়োজন")), "", "", bn("মোট বাকি"), inp("2000", "dis")]);

document.getElementById("gridB").innerHTML =
  row("h", ["#", bn("আইডি"), bn("বিবরণ"), bn("জোড়া"), bn("জোড়া দাম"), bn("হিসাব")]) +
  row("m b", ["1", inp("1-1"), "jama", inp("2"), inp("1520", "dis"), `3040<span class="del">×</span>`]) +
  sum("g", "মোট দাম", "3040") + sum("l b", "কমিশন", pct("28")) + sum("g", "মোট কমিশন", "851.2") +
  sum("b", "কমিশন ছাড়া দাম", "2188.8") + sum("g", "সাবেক বাকি", "2000") + sum("b", "সাবেক বাকিসহ মোট", "4188") +
  row("m g", ["", bn("এক্সট্রা খরচ"), bn("এক্সট্রা খরচ বিবরণ"), inp(), bn("এক্সট্রা খরচ বাবদ"), inp()]) +
  sum("m b", "পাঠানো খরচ", inp()) + sum("m g", "ডিস্কাউন্ট", inp()) + sum("m b", "জমা", inp("189")) +
  row("m g", ["", inp(), "", "", bn("মোট বাকি"), inp("3999", "dis")]);

/* ribbon: each group is [width, caption, drawing, labels, left edge]; coordinates are in window space */
const lab = (x, y, t, c = "") => `<span class="lab ${c}" style="left:${x}px;top:${y}px">${t}</span>`;
const down = (x, y, c = "#333") => `<path fill="${c}" d="M${x - 3} ${y}h6l-3 3z"/>`;
const shapes = [
  "M1 1l14 13", "M0 13q5 0 7-7t4 4 5-9", "M8 1a7 6.500 0 1 0 .1 0z", "M1 1h14v12H1z", "M4 1h8q3 0 3 3v6q0 3-3 3H4q-3 0-3-3V4q0-3 3-3z", "M5 1h7L9 6h6v7H1z", "M8 1l7 12H1z",
  "M1 0v13h14z", "M8 0l7 7-7 7-7-7z", "M8 0l7 6-3 8H4L1 6z", "M8 0l7 3.500v7L8 14l-7-3.500v-7z", "M1 4h7V0l7 7-7 7v-4H1z", "M15 4H8V0L1 7l7 7v-4h7z", "M5 14V7H1l7-7 7 7h-4v7z",
  "M5 0v7H1l7 7 7-7h-4V0z", "M8 0l2 5 6 2-6 2-2 5-2-5-6-2 6-2z", "M8 0l2 5h6l-5 3 2 6-5-4-5 4 2-6-5-3h6z", "M8 0l2 3h5l-2 4 2 4h-5l-2 3-2-3H1l2-4-2-4h5z", "M3 0h10q2 0 2 2v7q0 2-2 2H7l-3 3v-3H3q-2 0-2-2V2q0-2 2-2z", "M8 0q8 1 7 6-1 5-9 5l-3 3v-4Q0 8 1 5 2 1 8 0z", "M4 1q3-2 5 0 5-1 5 3 3 3 0 6-2 3-6 2l-4 2v-2Q0 11 2 8-1 4 4 1z"];
const shapeX = [374, 393, 414, 433, 453, 474, 494];
const palette = ["#000", "#7f7f7f", "#880015", "#ed1c24", "#ff7f27", "#fff200", "#22b14c", "#00a2e8", "#3f48cc", "#a349a4",
  "#fff", "#c3c3c3", "#b97a57", "#ffaec9", "#ffc90e", "#efe4b0", "#b5e61d", "#99d9ea", "#7092be", "#c8bfe7"];
const groups = [
  [107, "Clipboard", `<rect x="15.500" y="57.500" width="24" height="26" rx="2" fill="#b5813f" stroke="#8a5f2a"/><path fill="#fff" d="M18 60h19v21H18z"/><path stroke="#9fb4cf" d="M20 64.500h15M20 67.500h15M20 70.500h15M20 73.500h15M20 76.500h15"/><path fill="#aaa" stroke="#666" d="M21 60v-3h3q4-4 7 0h3v3z"/>
   <path stroke="#7d93a8" stroke-width="1.500" d="M55 55l5 9M62 55l-5 9"/><g fill="none" stroke="#1979ca" stroke-width="1.800"><circle cx="56" cy="66.500" r="2"/><circle cx="61.500" cy="66.500" r="2"/></g>
   <path fill="#fff" stroke="#888" d="M51.500 76.500h6l3 3v9h-9z"/><path fill="#fff" stroke="#667" d="M56.500 80.500h6l3 3v8h-9zM58 84.500h5M58 87.500h5"/>${down(26, 107)}`,
   lab(26, 41, "Paste", "mid") + lab(70, 6, "Cut") + lab(70, 28, "Copy"), 0],
  [122, "Image", `<rect x="111.500" y="51.500" width="41" height="65" fill="#c9e0f7" stroke="#62a2e4"/><path stroke="#62a2e4" d="M112 88.500h41"/><rect x="117.500" y="58.500" width="29" height="23" fill="none" stroke="#1b5b94" stroke-dasharray="2 1"/>
   <path fill="none" stroke="#1f6aa5" stroke-width="1.500" d="M162 56v9h9M159 59h9v9M162 65l8-8"/><path fill="#fff" stroke="#1f6aa5" stroke-width="1.300" d="M158.500 83.500h6v5h-6zM162 78.500h8.500v7H162z"/>
   <path fill="#1a6dab" d="M166 100l6 12h-6z"/><path fill="#bbb" d="M157 112l7-6v6z"/><path fill="none" stroke="#1f6aa5" d="M159 104q1-3 5-3"/>${down(131, 107)}${down(216, 105)}`,
   lab(131, 41, "Select", "mid") + lab(175, 6, "Crop") + lab(175, 28, "Resize") + lab(175, 50, "Rotate"), 107],
  [80, "Tools", `<path stroke="#e0b040" stroke-width="3.500" d="M239 76l9-10"/><path stroke="#b55" stroke-width="3.500" d="M248 66l3-2"/><path fill="#444" d="M237 78l1-4 3 2z"/>
   <path fill="#cfe3f5" stroke="#56789c" d="M262 71l6-7 7 5-5 8z"/><path fill="#e2502a" d="M261 65q4-2 4 2l-3 10q-3-5-1-12z"/><path fill="none" stroke="#1d3f66" stroke-width="2.600" d="M286 77l5.500-12 5.500 12M288 73.500h7"/>
   <path fill="#ef9a92" stroke="#c66" d="M237 101l8-8 8 1-8 10h-7z"/><path stroke="#7fa8c8" stroke-width="2.500" d="M262 105l8-8"/><path stroke="#1f5f96" stroke-width="5" d="M268 98l6-6"/>
   <circle cx="290" cy="97" r="5" fill="#e3f0fa" stroke="#8aa0b5" stroke-width="1.500"/><path stroke="#b97b3a" stroke-width="3" d="M294 101l4 5"/>`, "", 229],
  [57, "", `<rect x="320.500" y="54.500" width="31" height="31" fill="#f4f4f4" stroke="#999"/><path fill="none" stroke="#e2532b" stroke-width="4" d="M333 61q-12 4-9 16 3 7 12 1"/><path fill="#8a6038" d="M334 80q0-10 9-11l4 5q-3 8-13 6z"/><path stroke="#556" stroke-width="3.500" d="M344 70l7-13"/>${down(335, 107)}`,
   lab(335, 41, "Brushes", "mid"), 309],
  [246, "Shapes", `<rect x="371.500" y="54.500" width="156" height="59" fill="#fbfcfd" stroke="#d0d1d2"/><path stroke="#d8d9da" d="M513.500 55v58"/>` +
   shapes.map((d, i) => `<path transform="translate(${shapeX[i % 7]} ${[57, 76, 97][i / 7 | 0]})" fill="${i > 1 ? "#edf6fc" : "none"}" stroke="#2a6496" stroke-width="1.100" d="${d}"/>`).join("") +
   `<path fill="#999" d="M517 66h6l-3-3z"/>${down(520, 83, "#456")}<path stroke="#456" d="M517 100.500h6"/>${down(520, 103, "#456")}
   <g fill="#e6edf5" stroke="#9fb0c6" stroke-width="1.300"><path d="M534.500 58.500h13v10h-13zM538 67l10-11"/><path d="M535 82l7-6 7 7-6 7z"/></g><path fill="#a8b6ca" d="M534 89h16v3h-16z"/>${down(599, 60, "#aaa")}${down(574, 82, "#aaa")}`,
   lab(553, 6, "Outline", "off") + lab(553, 28, "Fill", "off"), 366],
  [53, "", `<path fill="#7b8fb3" d="M621 55h32v1h-32zM621 60h32v2h-32zM621 67h32v4h-32zM621 75h32v7h-32z"/>${down(636, 107, "#aaa")}`, lab(636, 41, "Size", "mid off"), 612],
  [357, "Colors", `<rect x="669.500" y="51.500" width="41" height="65" fill="#c9e0f7" stroke="#62a2e4"/><rect x="674.500" y="54.500" width="31" height="31" fill="#c9e0f7" stroke="#808080"/><path d="M676 56h28v28h-28z"/><rect x="720.500" y="58.500" width="23" height="23" fill="#fff" stroke="#808080"/>` +
   Array.from({ length: 30 }, (_, i) => { const x = 754 + i % 10 * 22, y = 52 + (i / 10 | 0) * 22; return `<rect x="${x + .5}" y="${y + .5}" width="19" height="19" fill="${i < 20 ? "#fff" : "#f5f6f7"}" stroke="#a0a0a0"/>` + (i < 20 ? `<rect x="${x + 2}" y="${y + 2}" width="16" height="16" fill="${palette[i]}"/>` : ""); }).join("") +
   `<rect x="979.500" y="55.500" width="28" height="28" rx="1" fill="#fff" stroke="#aaa"/><path fill="url(#gRain)" d="M981 57h25v25h-25z"/><path fill="url(#gFade)" d="M981 57h25v25h-25z"/>`,
   lab(690, 41, "Color", "mid") + lab(731, 41, "Color", "mid") + lab(993, 41, "Edit", "mid"), 665,
   lab(690, 54, "1", "mid") + lab(731, 54, "2", "mid") + lab(993, 54, "colors", "mid")]
];
/* the pasted copy shows only its lowest 28px, so the upper labels are left out there */
const ribbonHtml = full => groups.map(([w, cap, art, upper, x, lower = ""]) =>
  `<div class="grp" style="width:${w}px"><svg viewBox="${x} 46 ${w} 92" width="${w}" height="92">${art}</svg>${((full ? upper : "") + lower).replace(/left:(\d+)px/g, (_, n) => `left:${n - x}px`)}${cap}</div>`).join("");
document.getElementById("ribbon").innerHTML = ribbonHtml(true);
document.getElementById("ribbon2").innerHTML = ribbonHtml(false);
```
